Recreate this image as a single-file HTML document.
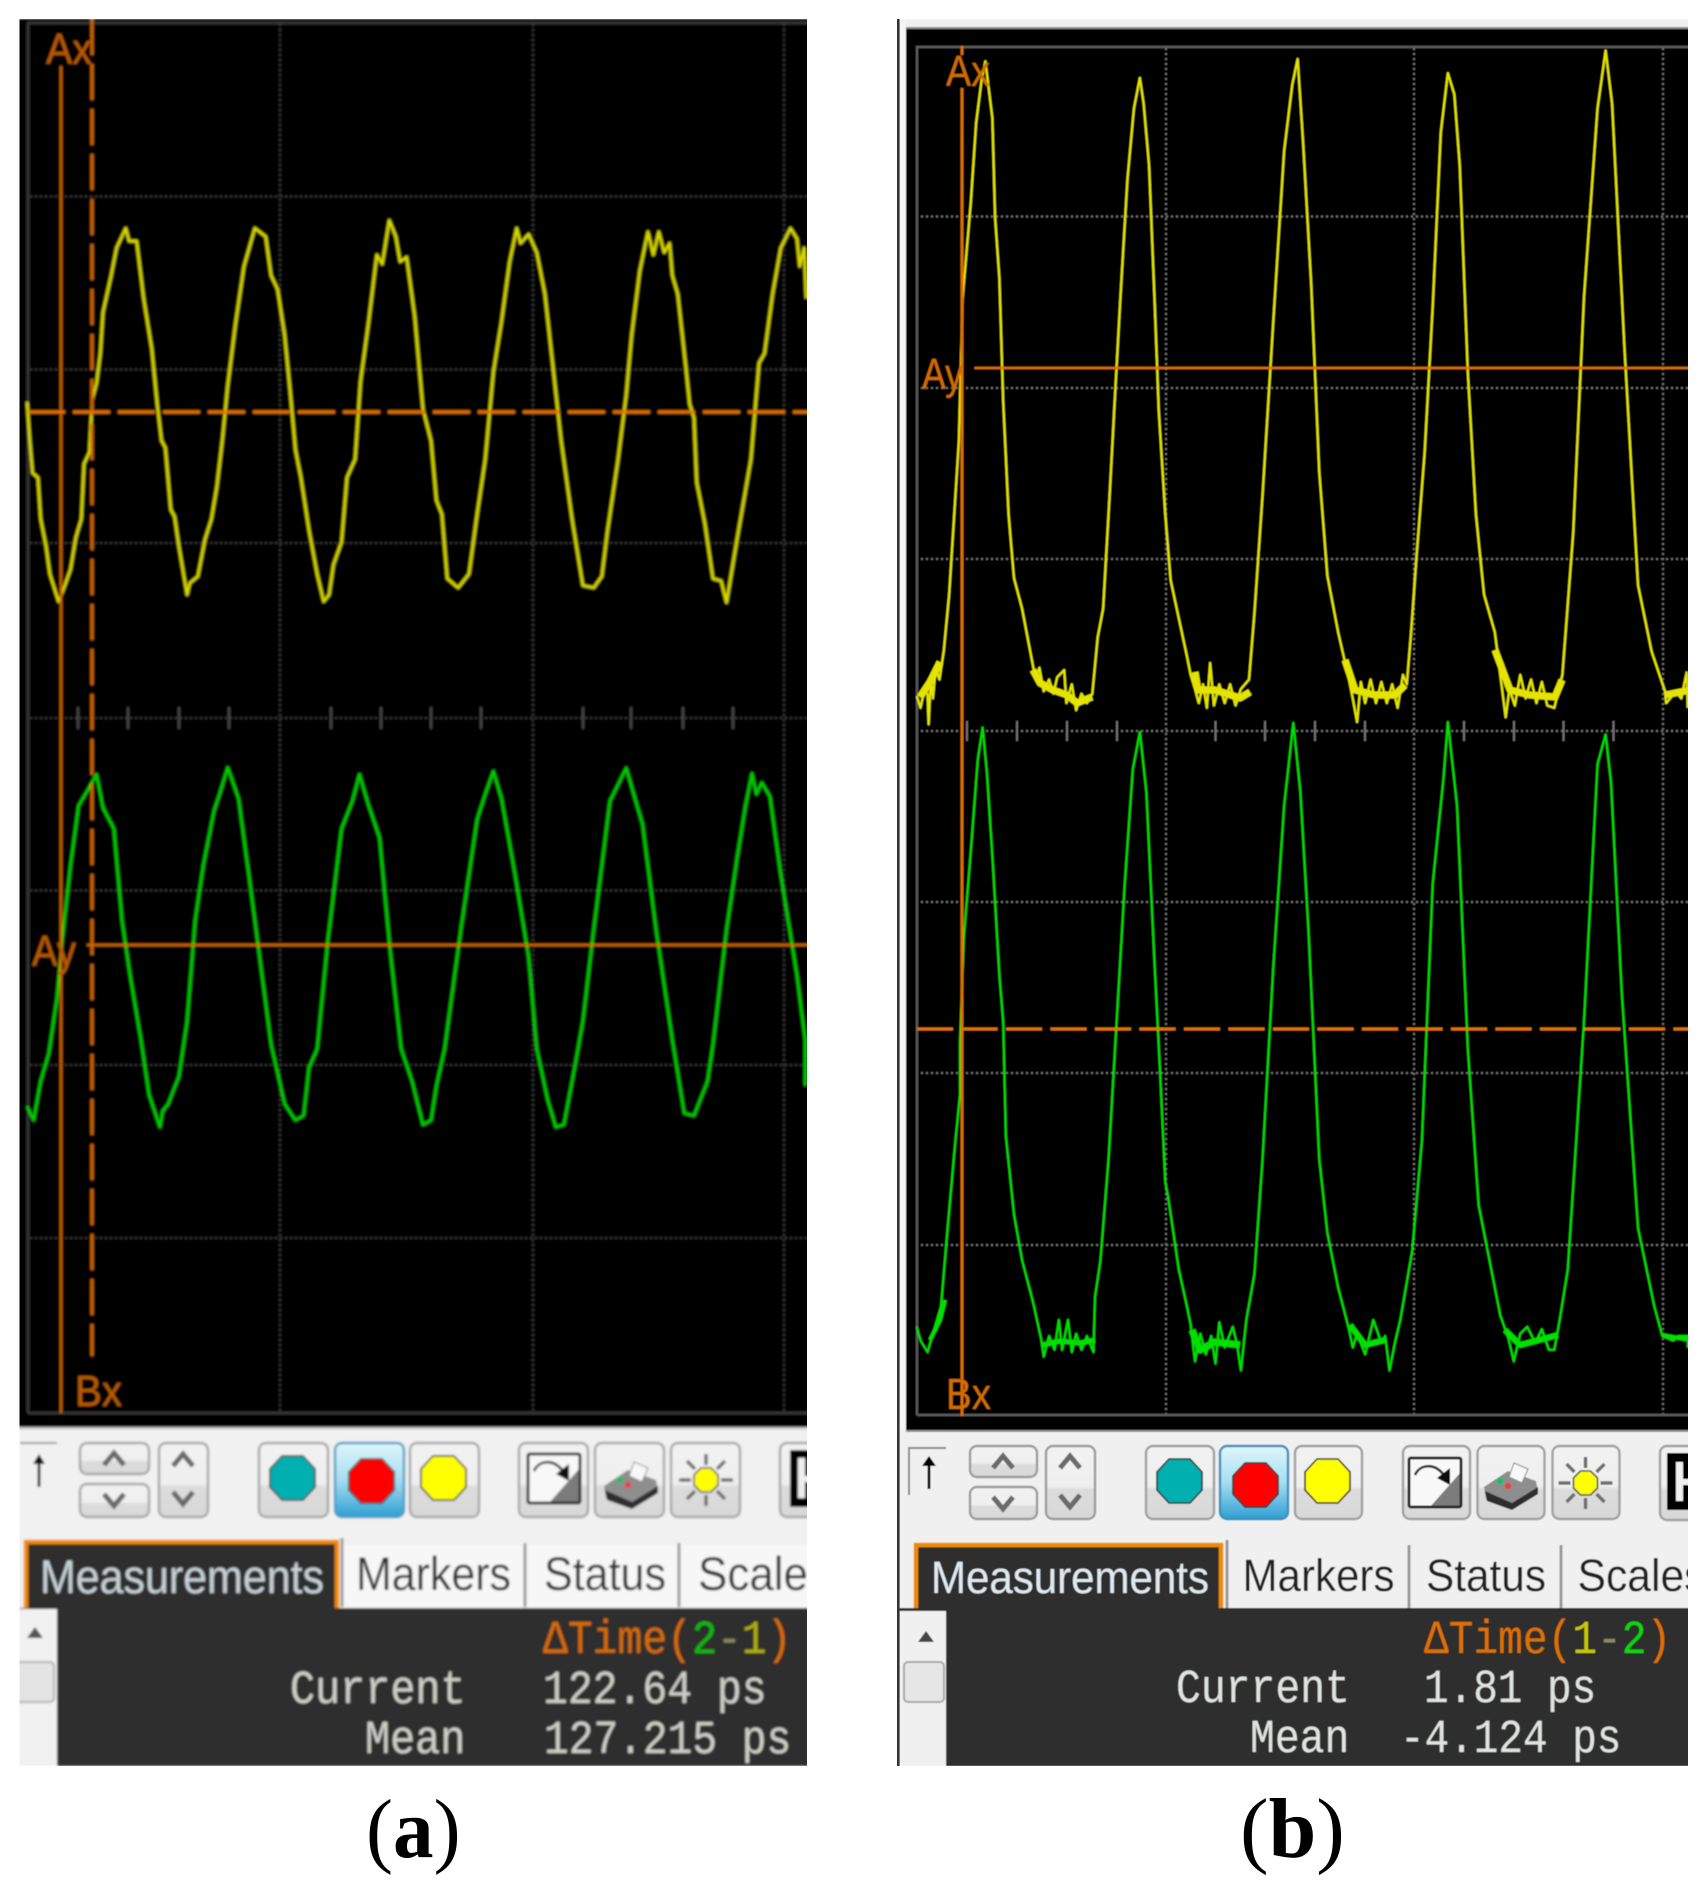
<!DOCTYPE html>
<html><head><meta charset="utf-8">
<style>
html,body{margin:0;padding:0;background:#fff;width:1707px;height:1899px;overflow:hidden}
svg{display:block}
.t{font-family:"Liberation Sans",sans-serif}
.m{font-family:"Liberation Mono",monospace;font-size:41px;fill:#cfcfc8}
.o{font-family:"Liberation Sans",sans-serif;font-weight:400}
.c{font-family:"Liberation Serif",serif;font-size:78px;fill:#000}
polyline{fill:none;stroke-linejoin:round;vector-effect:non-scaling-stroke}
</style></head><body>
<svg width="1707" height="1899" viewBox="0 0 1707 1899" xmlns="http://www.w3.org/2000/svg">
<defs>
<filter id="b1" x="-2%" y="-2%" width="104%" height="104%"><feGaussianBlur stdDeviation="1.05"/></filter>
<filter id="b2" x="-2%" y="-2%" width="104%" height="104%"><feGaussianBlur stdDeviation="0.6"/></filter>
<clipPath id="ca"><rect x="19.5" y="19" width="787.5" height="1747"/></clipPath>
<clipPath id="cb"><rect x="898" y="19" width="790" height="1747"/></clipPath>
<linearGradient id="bg" x1="0" y1="0" x2="0" y2="1"><stop offset="0" stop-color="#f2f2f2"/><stop offset=".55" stop-color="#efefef"/><stop offset=".6" stop-color="#dcdcdc"/><stop offset="1" stop-color="#d8d8d8"/></linearGradient>
<linearGradient id="bl" x1="0" y1="0" x2="0" y2="1"><stop offset="0" stop-color="#dff6fb"/><stop offset=".5" stop-color="#a6def0"/><stop offset="1" stop-color="#2f9fd2"/></linearGradient>
<polygon id="oct" points="12,0 33,0 45,13 45,31 33,44 12,44 0,31 0,13" stroke="#333" stroke-width="1.6"/>
<g id="ibox">
  <rect x="1" y="1" width="52" height="49" rx="2" fill="#f8f8f8"/>
  <polygon points="53,15 53,50 22,50" fill="#7c7c7c"/>
  <rect x="1" y="1" width="52" height="49" rx="2" fill="none" stroke="#2a2a2a" stroke-width="3"/>
  <path d="M7,18 C12,7 26,6 35,17" fill="none" stroke="#333" stroke-width="2.6"/>
  <polygon points="42,28 29,21 42,11" fill="#111"/>
</g>
<g id="iprint">
  <path d="M0,26 L24,10 L52,20 L54,30 L28,48 L2,38 Z" fill="#8e8e8e"/>
  <path d="M1,30 L28,42 L54,26 L54,33 L28,49 L3,40 Z" fill="#2e2e2e"/>
  <polygon points="30,2 44,8 38,22 25,16" fill="#f8f8f8" stroke="#888" stroke-width="1"/>
  <circle cx="16" cy="20" r="3.2" fill="#10c060"/><circle cx="24" cy="25" r="3.2" fill="#e84040"/>
</g>
<g id="isun" stroke="#6e6e6e" stroke-width="3.4" fill="none">
  <path d="M0,-26V-15M0,26V15M-27,0H-15M27,0H15M-19,-19L-11,-11M19,-19L11,-11M-19,19L-11,11M19,19L11,11"/>
  <polygon points="-5,-12 5,-12 12,-5 12,5 5,12 -5,12 -12,5 -12,-5" fill="#ffff00" stroke="#555" stroke-width="1.6"/>
</g>
<path id="up" d="M-10,6 L0,-6 L10,6" fill="none" stroke="#6a6a6a" stroke-width="5"/>
<path id="dn" d="M-10,-6 L0,6 L10,-6" fill="none" stroke="#6a6a6a" stroke-width="5"/>
<g id="btn"><rect x="0" y="0" width="69" height="74" rx="7" fill="url(#bg)" stroke="#a6a6a6" stroke-width="2.4"/></g>
</defs>
<rect width="1707" height="1899" fill="#fff"/>

<!-- PANEL A -->
<g clip-path="url(#ca)"><g filter="url(#b1)">
<rect x="10" y="19" width="810" height="1409" fill="#000"/>
<rect x="10" y="1428" width="810" height="180" fill="#f1f1f1"/>
<rect x="10" y="1427" width="810" height="2.5" fill="#c6c6c6"/>
<path d="M28,1413V23H815M28,1413H815" fill="none" stroke="#3a3a3a" stroke-width="2.5"/>
<g stroke="#3c3c3c" stroke-width="2" stroke-dasharray="2 3" fill="none">
<path d="M30,196.5H815M30,369.5H815M30,543H815M30,718H815M30,890.5H815M30,1065H815M30,1238H815M280,24V1412M533,24V1412M784,24V1412"/>
</g>
<path stroke="#484848" stroke-width="2" d="M78,707v22M128,707v22M179,707v22M229,707v22M331,707v22M381,707v22M431,707v22M481,707v22M583,707v22M631,707v22M683,707v22M733,707v22"/>
<g transform="scale(.5422,.4592)">
<polyline stroke="#d9d900" stroke-width="2.8" points="50,875 55,960 60,1030 70,1040 75,1130 85,1190 92,1250 108,1310 118,1280 130,1240 140,1170 150,1130 155,1010 165,985 170,870 178,835 185,770 190,680 205,600 215,540 232,497 238,525 252,525 265,650 280,760 290,880 298,960 305,975 315,1110 322,1125 330,1190 345,1295 350,1270 365,1255 378,1175 390,1130 400,1060 410,960 420,840 435,700 450,580 470,497 490,515 500,600 512,630 525,730 535,850 545,980 555,1040 570,1155 585,1250 597,1310 607,1295 615,1230 630,1180 640,1040 655,1000 665,830 680,700 695,555 705,575 718,480 730,515 738,570 750,560 765,690 780,890 795,960 805,1090 815,1120 825,1260 845,1280 865,1250 880,1120 895,1000 910,810 925,700 940,570 953,497 960,530 975,510 990,550 1005,640 1020,800 1035,960 1055,1130 1075,1275 1095,1280 1110,1255 1120,1160 1140,1000 1155,860 1165,730 1180,590 1195,505 1205,555 1215,505 1225,550 1235,530 1240,600 1250,640 1265,800 1272,880 1280,910 1285,1050 1300,1140 1315,1260 1330,1265 1340,1312 1360,1170 1385,1000 1400,790 1410,770 1425,640 1440,540 1458,497 1470,520 1475,580 1483,540 1487,650"/>
</g>
<g transform="translate(0,700) scale(.5422,.4592)">
<polyline stroke="#00d000" stroke-width="2.8" points="50,885 62,915 75,830 90,770 105,650 115,520 130,360 145,230 160,200 178,162 190,235 210,280 225,480 240,600 260,740 275,860 295,930 300,895 310,880 330,820 345,700 360,480 375,360 395,240 405,205 420,147 440,215 460,390 480,570 500,750 525,880 545,915 560,905 570,800 585,760 605,520 630,280 650,220 663,162 680,230 700,300 720,550 740,760 760,830 780,925 795,915 805,840 820,760 850,500 880,260 895,205 910,155 925,215 950,380 975,560 990,760 1010,870 1025,930 1040,925 1060,800 1075,700 1095,500 1125,220 1155,148 1170,210 1185,270 1210,500 1240,740 1262,900 1280,905 1305,830 1315,750 1340,500 1360,340 1375,230 1387,160 1395,205 1405,180 1420,210 1440,380 1470,600 1485,740 1485,840"/>
</g>
<g fill="none" stroke="#c86400">
<path d="M61,66V1413" stroke-width="2.6"/>
<path d="M92,19V1356" stroke-width="3" stroke-dasharray="36 9"/>
<path d="M28,412H815" stroke="#e27200" stroke-width="3" stroke-dasharray="37 8"/>
<path d="M87,945H815" stroke="#d06800" stroke-width="2.6"/>
</g>
<g class="o" fill="#b85c00" font-size="44">
<text x="46" y="64" textLength="46" lengthAdjust="spacingAndGlyphs">Ax</text>
<text x="32" y="966" textLength="44" lengthAdjust="spacingAndGlyphs">Ay</text>
<text x="75" y="1406" textLength="47" lengthAdjust="spacingAndGlyphs">Bx</text>
</g>
<!-- toolbar A -->
<path d="M20,1443H57" stroke="#999" stroke-width="2"/>
<path d="M39,1487V1458" stroke="#222" stroke-width="3"/><polygon points="39,1454 33,1464 45,1464" fill="#111"/>
<rect x="80" y="1443" width="69" height="31" rx="7" fill="url(#bg)" stroke="#a6a6a6" stroke-width="2.4"/>
<rect x="80" y="1484" width="69" height="33" rx="7" fill="url(#bg)" stroke="#a6a6a6" stroke-width="2.4"/>
<rect x="159" y="1443" width="49" height="74" rx="7" fill="url(#bg)" stroke="#a6a6a6" stroke-width="2.4"/>
<use href="#up" x="114" y="1459"/><use href="#dn" x="114" y="1500"/><use href="#up" x="183" y="1460"/><use href="#dn" x="183" y="1498"/>
<use href="#btn" x="259" y="1443"/>
<rect x="335" y="1443" width="69" height="74" rx="7" fill="url(#bl)" stroke="#4f9cc8" stroke-width="2.4"/>
<use href="#btn" x="410" y="1443"/><use href="#btn" x="519" y="1443"/><use href="#btn" x="595" y="1443"/><use href="#btn" x="671" y="1443"/><use href="#btn" x="780" y="1443"/>
<use href="#oct" x="270" y="1456" fill="#00b0b0"/><use href="#oct" x="349" y="1459" fill="#ff0000"/><use href="#oct" x="421" y="1456" fill="#ffff00"/>
<use href="#ibox" x="527" y="1453"/><use href="#iprint" x="604" y="1460"/><use href="#isun" x="706" y="1480"/>
<rect x="790" y="1450" width="25" height="57" fill="#000"/><rect x="798" y="1458" width="7" height="40" fill="#eee"/><rect x="805" y="1476" width="6" height="6" fill="#eee"/>
<!-- tabs A -->
<rect x="340" y="1545" width="475" height="63" fill="#f7f7f7"/>
<path d="M342,1538V1607M525,1543V1607M679,1543V1607" stroke="#9a9a9a" stroke-width="3"/>
<rect x="26" y="1542" width="311" height="70" fill="#2d2d2d" stroke="#f08a00" stroke-width="4.5"/>
<rect x="10" y="1608" width="810" height="158" fill="#2d2d2d"/>
<rect x="10" y="1609" width="47" height="157" fill="#f1f1f1"/>
<polygon points="35,1627 27,1638 43,1638" fill="#555"/>
<rect x="15" y="1662" width="39" height="40" rx="4" fill="#e4e4e4" stroke="#b0b0b0" stroke-width="2"/>
<g class="t" font-size="47">
<text x="40" y="1593" fill="#c6d0d6" textLength="284" lengthAdjust="spacingAndGlyphs">Measurements</text>
<g fill="#333"><text x="356" y="1590" textLength="155" lengthAdjust="spacingAndGlyphs">Markers</text>
<text x="544" y="1590" textLength="122" lengthAdjust="spacingAndGlyphs">Status</text>
<text x="698" y="1590" textLength="132" lengthAdjust="spacingAndGlyphs">Scales</text></g>
</g>
<text class="m" transform="translate(543,1653) scale(1.01,1.15)" style="fill:#d86c00">ΔTime(<tspan style="fill:#00c000">2</tspan><tspan style="fill:#8a8a60">-</tspan><tspan style="fill:#b0b000">1</tspan>)</text>
<text class="m" transform="translate(290,1703) scale(1.02,1.15)">Current</text>
<text class="m" transform="translate(543,1703) scale(1.01,1.15)">122.64 ps</text>
<text class="m" transform="translate(365,1753) scale(1.02,1.15)">Mean</text>
<text class="m" transform="translate(544,1753) scale(1.005,1.15)">127.215 ps</text>
</g></g>

<!-- PANEL B -->
<g clip-path="url(#cb)"><g filter="url(#b2)">
<rect x="905" y="19" width="795" height="9" fill="#efefef"/>
<rect x="906" y="28" width="795" height="1403" fill="#000"/>
<rect x="906" y="27" width="795" height="2" fill="#8a8a8a"/>
<rect x="899" y="1431" width="800" height="177" fill="#f0f0f0"/>
<rect x="906" y="1430" width="795" height="2" fill="#8c8c8c"/>
<rect x="899" y="19" width="7" height="1412" fill="#f4f4f4"/>
<path d="M917,1415V47H1700M917,1415H1700" fill="none" stroke="#5c5c5c" stroke-width="2.4"/>
<g stroke="#6a6a6a" stroke-width="2" stroke-dasharray="2 3" fill="none">
<path d="M921,216.5H1700M921,388H1700M921,559H1700M921,731H1700M921,902H1700M921,1073H1700M921,1245H1700M1166,48V1414M1414,48V1414M1663,48V1414"/>
</g>
<path stroke="#6e6e6e" stroke-width="2" d="M967,721v20M1017,721v20M1067,721v20M1117,721v20M1215.5,721v20M1265,721v20M1315,721v20M1365,721v20M1464,721v20M1514,721v20M1563.5,721v20M1613.5,721v20"/>
<g transform="translate(860,0) scale(.5403,.4719)">
<polyline stroke="#e4e400" stroke-width="2.3" points="105,1475 112,1500 118,1468 125,1470 127,1535 131,1440 135,1480 140,1415 147,1440 155,1380 165,1260 175,1080 183,935 190,630 205,430 215,260 225,170 232,130 245,250 250,460 258,590 265,850 275,1090 285,1225 300,1290 315,1380 325,1440 332,1415 340,1465 350,1440 358,1470 365,1435 378,1420 382,1490 392,1450 400,1505 410,1470 420,1490 430,1470 440,1350 450,1290 462,1050 470,880 482,630 495,380 507,230 518,165 525,220 535,350 545,630 553,870 565,1090 575,1230 590,1310 605,1390 612,1430 620,1460 627,1490 635,1450 642,1500 648,1405 655,1495 665,1450 675,1490 685,1450 695,1495 705,1460 720,1440 730,1300 745,1050 765,680 785,320 800,180 810,125 820,300 835,600 850,1000 865,1220 885,1340 905,1440 912,1480 920,1530 927,1445 935,1490 945,1440 955,1490 965,1445 975,1490 985,1450 995,1500 1005,1430 1012,1450 1020,1340 1030,1180 1045,960 1060,650 1075,280 1088,155 1100,200 1110,350 1125,790 1140,1090 1155,1260 1175,1340 1185,1430 1195,1520 1202,1460 1212,1495 1222,1430 1232,1480 1242,1440 1252,1490 1262,1445 1272,1495 1285,1500 1300,1430 1320,1130 1340,630 1365,230 1380,107 1392,220 1415,740 1440,1240 1465,1380 1490,1465 1492,1490 1510,1465 1520,1480 1530,1425 1532,1500"/>
</g>
<g fill="none" stroke="#e4e400" stroke-width="7" stroke-linejoin="round">
<path d="M920,697L930,682L940,662"/>
<path d="M1033,670L1040,683L1053,690L1067,695L1077,703L1092,697"/>
<path d="M1195,672L1198,690L1215,690L1240,698L1250,692"/>
<path d="M1345,660L1355,690L1375,695L1395,695L1405,685"/>
<path d="M1495,650L1510,690L1530,695L1555,697L1562,680"/>
<path d="M1665,695L1690,690"/>
</g>
<g transform="translate(860,700) scale(.5403,.4592)">
<polyline stroke="#00e000" stroke-width="2.2" points="105,1365 112,1395 125,1420 135,1380 150,1320 160,1180 175,980 185,860 185,750 192,520 205,330 218,130 227,60 235,160 245,340 258,600 265,700 270,950 285,1120 300,1220 320,1310 335,1390 340,1430 350,1385 360,1415 368,1350 374,1415 385,1350 392,1420 400,1380 410,1415 420,1385 432,1420 435,1300 445,1220 460,1000 475,700 490,400 505,150 518,70 530,200 545,570 555,800 565,1050 570,1080 590,1240 605,1320 612,1360 620,1440 630,1380 640,1425 650,1385 658,1445 665,1355 675,1410 690,1365 698,1405 705,1460 715,1350 730,1250 745,1000 765,580 785,230 802,50 815,200 830,500 850,1000 865,1160 885,1280 905,1370 912,1410 920,1380 935,1425 950,1350 965,1400 972,1385 980,1460 990,1400 1000,1350 1022,1200 1040,960 1060,400 1080,170 1088,48 1105,230 1125,760 1145,1100 1165,1220 1185,1340 1200,1390 1210,1440 1222,1380 1235,1365 1250,1400 1262,1370 1275,1415 1285,1415 1295,1350 1310,1240 1340,700 1365,140 1380,75 1390,180 1410,640 1440,1150 1470,1320 1485,1385 1505,1395 1515,1385 1532,1385 1532,1410"/>
</g>
<g fill="none" stroke="#00e000" stroke-linejoin="round">
<path d="M1042,1345L1060,1341L1080,1343L1095,1340" stroke-width="5"/>
<path d="M1192,1330L1200,1350L1215,1342L1240,1345" stroke-width="7"/>
<path d="M1350,1325L1365,1345L1385,1340" stroke-width="6"/>
<path d="M1505,1330L1520,1345L1558,1335" stroke-width="6"/>
<path d="M1662,1335L1690,1340" stroke-width="4"/>
<path d="M930,1340L940,1320L945,1300" stroke-width="4"/>
</g>
<g fill="none" stroke="#e07000">
<path d="M962,46V55M962,88V1416" stroke-width="2.8"/>
<path d="M917,1029H1700" stroke-width="3" stroke-dasharray="36 8.5"/>
<path d="M974.5,368H1700" stroke-width="2.6"/>
</g>
<g class="o" fill="#d06c00" font-size="44">
<text x="946" y="86" textLength="44" lengthAdjust="spacingAndGlyphs">Ax</text>
<text x="922" y="389" textLength="41" lengthAdjust="spacingAndGlyphs">Ay</text>
<text x="946" y="1409" textLength="45" lengthAdjust="spacingAndGlyphs">Bx</text>
</g>
<!-- toolbar B -->
<path d="M909,1495V1448H946" fill="none" stroke="#888" stroke-width="2"/>
<path d="M929,1489V1460" stroke="#111" stroke-width="3"/><polygon points="929,1456 922,1466 936,1466" fill="#000"/>
<rect x="970" y="1446" width="67" height="31" rx="7" fill="url(#bg)" stroke="#9c9c9c" stroke-width="2.4"/>
<rect x="970" y="1487" width="67" height="32" rx="7" fill="url(#bg)" stroke="#9c9c9c" stroke-width="2.4"/>
<rect x="1046" y="1446" width="49" height="73" rx="7" fill="url(#bg)" stroke="#9c9c9c" stroke-width="2.4"/>
<use href="#up" x="1003" y="1462"/><use href="#dn" x="1003" y="1503"/><use href="#up" x="1070" y="1462"/><use href="#dn" x="1070" y="1501"/>
<rect x="1146" y="1446" width="68" height="73" rx="7" fill="url(#bg)" stroke="#a0a0a0" stroke-width="2.4"/>
<rect x="1220" y="1446" width="68" height="73" rx="7" fill="url(#bl)" stroke="#3f8fbf" stroke-width="2.4"/>
<rect x="1295" y="1446" width="67" height="73" rx="7" fill="url(#bg)" stroke="#a0a0a0" stroke-width="2.4"/>
<rect x="1403" y="1446" width="67" height="73" rx="7" fill="url(#bg)" stroke="#a0a0a0" stroke-width="2.4"/>
<rect x="1477.5" y="1446" width="67" height="73" rx="7" fill="url(#bg)" stroke="#a0a0a0" stroke-width="2.4"/>
<rect x="1552.5" y="1446" width="67" height="73" rx="7" fill="url(#bg)" stroke="#a0a0a0" stroke-width="2.4"/>
<rect x="1660" y="1446" width="60" height="74" rx="7" fill="url(#bg)" stroke="#a0a0a0" stroke-width="2.4"/>
<use href="#oct" x="1157" y="1459" fill="#00b0b0"/><use href="#oct" x="1233" y="1463" fill="#ff0000"/><use href="#oct" x="1305" y="1459" fill="#ffff00"/>
<use href="#ibox" x="1408" y="1457"/><use href="#iprint" x="1484" y="1461"/><use href="#isun" x="1585.5" y="1483"/>
<rect x="1667" y="1453" width="30" height="57" fill="#000"/><rect x="1676" y="1462" width="7" height="39" fill="#f0f0f0"/><rect x="1683" y="1479" width="6" height="6" fill="#f0f0f0"/>
<!-- tabs B -->
<path d="M1227,1540V1608M1409,1545V1608M1561,1545V1608" stroke="#9a9a9a" stroke-width="3"/>
<rect x="916" y="1545" width="305" height="70" fill="#2d2d2d" stroke="#f08a00" stroke-width="4.5"/>
<rect x="899" y="1608" width="800" height="158" fill="#2d2d2d"/>
<rect x="899" y="1611" width="47" height="155" fill="#f0f0f0"/>
<polygon points="926,1631 918,1642 934,1642" fill="#444"/>
<rect x="904" y="1662" width="40" height="40" rx="4" fill="#e6e6e6" stroke="#a8a8a8" stroke-width="2"/>
<g class="t" font-size="45">
<text x="931" y="1593" fill="#dfeaf0" textLength="278" lengthAdjust="spacingAndGlyphs">Measurements</text>
<g fill="#222"><text x="1242.5" y="1591" textLength="152" lengthAdjust="spacingAndGlyphs">Markers</text>
<text x="1426" y="1591" textLength="120" lengthAdjust="spacingAndGlyphs">Status</text>
<text x="1577.5" y="1591" textLength="128" lengthAdjust="spacingAndGlyphs">Scales</text></g>
</g>
<text class="m" transform="translate(1424,1653) scale(1.005,1.15)" style="fill:#e07000">ΔTime(<tspan style="fill:#c8c800">1</tspan><tspan style="fill:#8a8a60">-</tspan><tspan style="fill:#00e000">2</tspan>)</text>
<text class="m" transform="translate(1176,1702) scale(1.01,1.15)" style="fill:#dfe4e0">Current</text>
<text class="m" transform="translate(1424,1702) scale(1,1.15)" style="fill:#dfe4e0">1.81 ps</text>
<text class="m" transform="translate(1250,1752) scale(1.01,1.15)" style="fill:#dfe4e0">Mean</text>
<text class="m" transform="translate(1400,1752) scale(1,1.15)" style="fill:#dfe4e0">-4.124 ps</text>
</g></g>
<rect x="897" y="19" width="2.6" height="1747" fill="#333"/>

<!-- captions -->
<text class="c" transform="translate(366,1857) scale(1.04,1.08)">(<tspan font-weight="700">a</tspan>)</text>
<text class="c" transform="translate(1240,1857) scale(1.1,1.08)">(<tspan font-weight="700">b</tspan>)</text>
</svg>
</body></html>
